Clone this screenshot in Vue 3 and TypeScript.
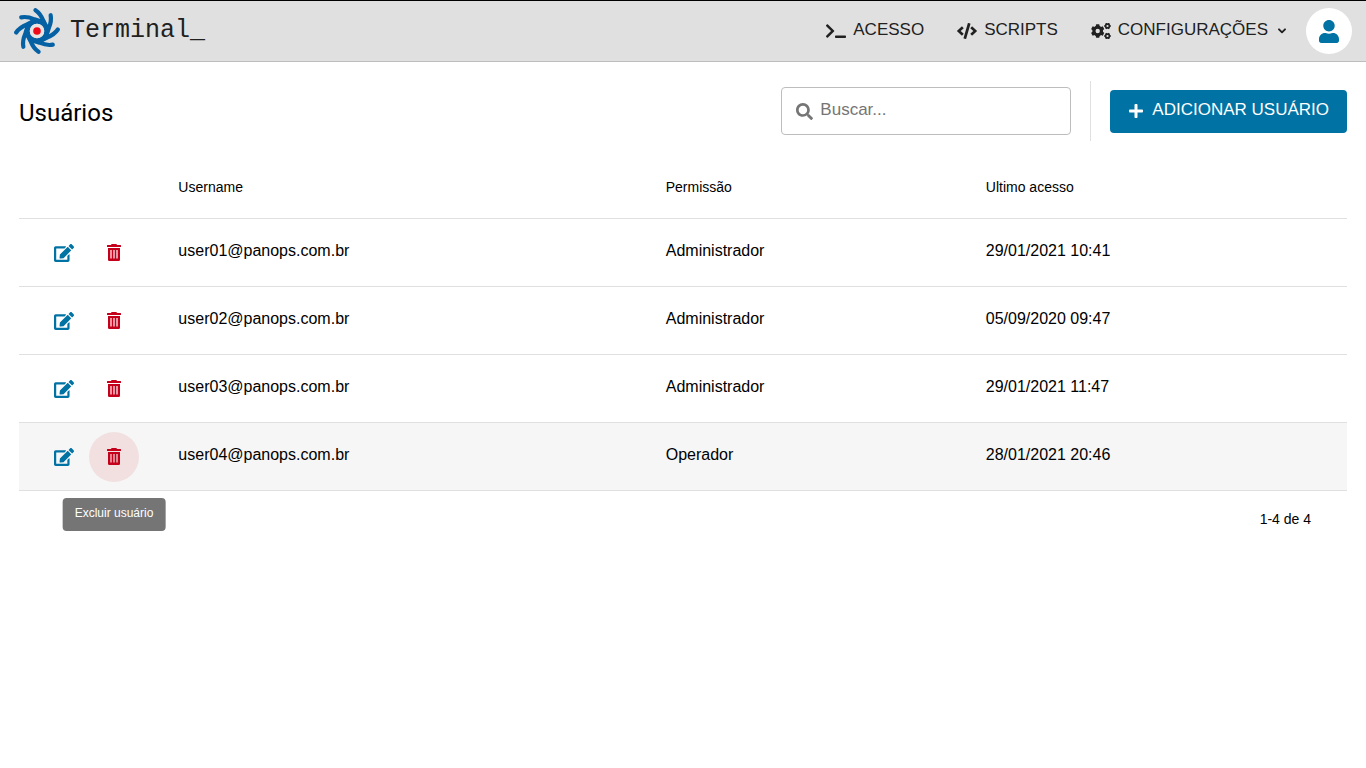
<script setup lang="ts">
import { ref, computed } from 'vue'

interface User {
  name: string
  role: string
  lastAccess: string
}

const search = ref('')
const active = ref('user04@panops.com.br')

const users: User[] = [
  { name: 'user01@panops.com.br', role: 'Administrador', lastAccess: '29/01/2021 10:41' },
  { name: 'user02@panops.com.br', role: 'Administrador', lastAccess: '05/09/2020 09:47' },
  { name: 'user03@panops.com.br', role: 'Administrador', lastAccess: '29/01/2021 11:47' },
  { name: 'user04@panops.com.br', role: 'Operador', lastAccess: '28/01/2021 20:46' },
]

const filtered = computed(() =>
  users.filter((u) => u.name.toLowerCase().includes(search.value.toLowerCase())),
)

const blades = [0, 45, 90, 135, 180, 225, 270, 315]
const teeth = [0, 60, 120, 180, 240, 300]
</script>

<template>
  <div class="page">
    <header class="topbar">
      <a class="brand" href="#">
        <svg class="logo" viewBox="-23 -23 46 46" aria-hidden="true">
          <g fill="none" stroke="#0561a4" stroke-width="4.2" stroke-linecap="round">
            <path
              v-for="angle in blades"
              :key="angle"
              d="M-1.5 -20.8Q3.5 -17.5 6.5 -10Q8 -7 10 -3"
              :transform="`rotate(${angle})`"
            />
            <circle r="9.8" stroke-width="5" />
          </g>
          <circle r="7.2" fill="#e6e3e3" />
          <circle r="3.8" fill="#ee0a18" />
        </svg>
        <span class="brand-name">Terminal_</span>
      </a>

      <nav class="nav">
        <a class="nav-item" href="#">
          <svg class="nav-icon" viewBox="0 0 640 512" aria-hidden="true">
            <path d="M257.981 272.971L63.638 467.314c-9.373 9.373-24.569 9.373-33.941 0L7.029 444.647c-9.357-9.357-9.375-24.522-.04-33.901L161.011 256 6.99 101.255c-9.335-9.379-9.317-24.544.04-33.901l22.667-22.667c9.373-9.373 24.569-9.373 33.941 0L257.981 239.03c9.373 9.372 9.373 24.568 0 33.941zM640 456v-32c0-13.255-10.745-24-24-24H312c-13.255 0-24 10.745-24 24v32c0 13.255 10.745 24 24 24h304c13.255 0 24-10.745 24-24z" />
          </svg>
          <span class="label">ACESSO</span>
        </a>
        <a class="nav-item" href="#">
          <svg class="nav-icon" viewBox="0 0 640 512" aria-hidden="true">
            <path d="M278.9 511.5l-61-17.7c-6.4-1.8-10-8.5-8.2-14.9L346.2 8.7c1.8-6.4 8.5-10 14.9-8.2l61 17.7c6.4 1.8 10 8.5 8.2 14.9L293.8 503.3c-1.9 6.4-8.5 10.1-14.9 8.2zm-114-112.2l43.5-46.4c4.6-4.9 4.3-12.7-.8-17.2L117 256l90.6-79.7c5.1-4.5 5.5-12.3.8-17.2l-43.5-46.4c-4.5-4.8-12.1-5.1-17-.5L3.8 247.2c-5.1 4.7-5.1 12.8 0 17.5l144.1 135.1c4.9 4.6 12.5 4.4 17-.5zm327.2.6l144.1-135.1c5.1-4.7 5.1-12.8 0-17.5L492.1 112.1c-4.8-4.5-12.4-4.3-17 .5L431.6 159c-4.6 4.9-4.3 12.7.8 17.2L523 256l-90.6 79.7c-5.1 4.5-5.5 12.3-.8 17.2l43.5 46.4c4.5 4.9 12.1 5.1 17 .6z" />
          </svg>
          <span class="label">SCRIPTS</span>
        </a>
        <button class="nav-item" type="button" aria-haspopup="true">
          <svg class="nav-icon" viewBox="0 0 20 16" aria-hidden="true">
            <g transform="translate(6.7 8)">
              <rect
                v-for="angle in teeth"
                :key="angle"
                x="-1.8"
                y="-6.7"
                width="3.6"
                height="4"
                rx="0.6"
                :transform="`rotate(${angle})`"
              />
              <circle r="3.8" fill="none" stroke="currentColor" stroke-width="3.2" />
            </g>
            <g v-for="cy in [3, 13]" :key="cy" :transform="`translate(16.5 ${cy})`">
              <rect
                v-for="angle in teeth"
                :key="angle"
                x="-0.9"
                y="-3.2"
                width="1.8"
                height="1.6"
                :transform="`rotate(${angle + 30})`"
              />
              <circle r="1.9" fill="none" stroke="currentColor" stroke-width="1.6" />
            </g>
          </svg>
          <span class="label">CONFIGURAÇÕES</span>
          <svg class="chevron" viewBox="0 0 8 6" aria-hidden="true">
            <path d="M1 1.3L4 4.3L7 1.3" fill="none" stroke="currentColor" stroke-width="1.9" stroke-linecap="round" stroke-linejoin="round" />
          </svg>
        </button>
        <button class="avatar" type="button" aria-label="Perfil">
          <svg viewBox="0 0 448 512" aria-hidden="true">
            <path d="M224 256c70.7 0 128-57.3 128-128S294.7 0 224 0 96 57.3 96 128s57.3 128 128 128zm89.6 32h-16.7c-22.2 10.2-46.9 16-72.9 16s-50.6-5.8-72.9-16h-16.7C60.2 288 0 348.2 0 422.4V464c0 26.5 21.5 48 48 48h352c26.5 0 48-21.5 48-48v-41.6c0-74.2-60.2-134.4-134.4-134.4z" />
          </svg>
        </button>
      </nav>
    </header>

    <main class="content">
      <section class="toolbar">
        <h1>Usuários</h1>
        <label class="search">
          <svg viewBox="0 0 512 512" aria-hidden="true">
            <path d="M505 442.7L405.3 343c-4.5-4.5-10.6-7-17-7H372c27.6-35.3 44-79.7 44-128C416 93.1 322.9 0 208 0S0 93.1 0 208s93.1 208 208 208c48.3 0 92.7-16.4 128-44v16.3c0 6.4 2.5 12.5 7 17l99.7 99.7c9.4 9.4 24.6 9.4 33.9 0l28.3-28.3c9.4-9.4 9.4-24.6.1-34zM208 336c-70.7 0-128-57.2-128-128 0-70.7 57.2-128 128-128 70.7 0 128 57.2 128 128 0 70.7-57.2 128-128 128z" />
          </svg>
          <input v-model="search" type="text" placeholder="Buscar..." aria-label="Buscar" />
        </label>
        <div class="add-area">
          <button class="add" type="button">
            <svg viewBox="0 0 448 512" aria-hidden="true">
              <path d="M416 208H272V64c0-17.67-14.33-32-32-32h-32c-17.67 0-32 14.33-32 32v144H32c-17.67 0-32 14.33-32 32v32c0 17.67 14.33 32 32 32h144v144c0 17.67 14.33 32 32 32h32c17.67 0 32-14.33 32-32V304h144c17.67 0 32-14.33 32-32v-32c0-17.67-14.33-32-32-32z" />
            </svg>
            <span class="label">ADICIONAR USUÁRIO</span>
          </button>
        </div>
      </section>

      <table class="users">
        <colgroup>
          <col class="col-actions" />
          <col class="col-name" />
          <col class="col-role" />
          <col />
        </colgroup>
        <thead>
          <tr>
            <td></td>
            <th scope="col">Username</th>
            <th scope="col">Permissão</th>
            <th scope="col">Ultimo acesso</th>
          </tr>
        </thead>
        <tbody>
          <tr v-for="user in filtered" :key="user.name" :class="{ active: user.name === active }">
            <td>
              <div class="actions">
                <button class="action edit" type="button" aria-label="Editar usuário">
                  <svg viewBox="0 0 576 512" aria-hidden="true">
                    <path d="M402.6 83.2l90.2 90.2c3.8 3.8 3.8 10 0 13.8L274.4 405.6l-92.8 10.3c-12.4 1.4-22.9-9.1-21.5-21.5l10.3-92.8L388.8 83.2c3.8-3.8 10-3.8 13.8 0zm162-22.9l-48.8-48.8c-15.2-15.2-39.9-15.2-55.2 0l-35.4 35.4c-3.8 3.8-3.8 10 0 13.8l90.2 90.2c3.8 3.8 10 3.8 13.8 0l35.4-35.4c15.2-15.3 15.2-40 0-55.2zM384 346.2V448H64V128h229.8c3.2 0 6.2-1.3 8.5-3.5l40-40c7.6-7.6 2.2-20.5-8.5-20.5H48C21.5 64 0 85.5 0 112v352c0 26.5 21.5 48 48 48h352c26.5 0 48-21.5 48-48V306.2c0-10.7-12.9-16-20.5-8.5l-40 40c-2.2 2.3-3.5 5.3-3.5 8.5z" />
                  </svg>
                </button>
                <button class="action remove" type="button" aria-label="Excluir usuário">
                  <svg viewBox="0 0 14 17" aria-hidden="true">
                    <path d="M0.5 1H4L4.6 0H9.4L10 1H13.5Q14 1 14 1.5V3H0V1.5Q0 1 0.5 1Z" />
                    <path fill-rule="evenodd" d="M1 4H13V15.7Q13 17 11.7 17H2.3Q1 17 1 15.7ZM3.4 6V14.5H4.6V6ZM6.4 6V14.5H7.6V6ZM9.4 6V14.5H10.6V6Z" />
                  </svg>
                  <span v-if="user.name === active" class="tooltip" role="tooltip">Excluir usuário</span>
                </button>
              </div>
            </td>
            <td class="text">{{ user.name }}</td>
            <td class="text">{{ user.role }}</td>
            <td class="text">{{ user.lastAccess }}</td>
          </tr>
        </tbody>
      </table>
      <p class="range">1-4 de 4</p>
    </main>
  </div>
</template>

<style>
body {
  margin: 0;
  background: #fff;
}
</style>

<style scoped>
.page {
  color: #000;
  font-family: "Liberation Sans", Arial, sans-serif;
}
svg {
  display: block;
  flex: none;
  fill: currentColor;
}
button {
  padding: 0;
  border: 0;
  background: none;
  font: inherit;
  color: inherit;
  cursor: pointer;
}
.topbar {
  display: flex;
  align-items: center;
  justify-content: space-between;
  height: 60px;
  padding: 0 14px;
  border-top: 1px solid #000;
  border-bottom: 1px solid #bdbdbd;
  background: #e0e0e0;
}
.brand {
  display: flex;
  align-items: center;
  gap: 10px;
  color: #212121;
  text-decoration: none;
}
.logo {
  width: 46px;
  height: 46px;
}
.brand-name {
  font-family: "Liberation Mono", "Courier New", monospace;
  font-size: 25px;
  line-height: 32px;
}
.nav {
  display: flex;
  align-items: center;
  gap: 33px;
}
.nav-item {
  display: flex;
  align-items: center;
  gap: 7px;
  color: #212121;
  font-size: 17px;
  line-height: 20px;
  text-decoration: none;
}
.label {
  padding-bottom: 3px;
}
.nav-icon {
  width: 20px;
  height: 16px;
}
.chevron {
  width: 8px;
  height: 6px;
  margin-left: 3px;
}
.avatar {
  display: flex;
  align-items: center;
  justify-content: center;
  width: 46px;
  height: 46px;
  margin-left: -13px;
  border-radius: 50%;
  background: #fff;
  color: #0072a3;
}
.avatar svg {
  width: 20px;
  height: 23px;
}
.content {
  padding: 19px;
}
.toolbar {
  display: flex;
  align-items: center;
}
h1 {
  margin: 0 auto 0 0;
  padding-top: 3px;
  font-family: Roboto, sans-serif;
  font-size: 24px;
  font-weight: 400;
  line-height: 32px;
}
.search {
  display: flex;
  align-items: center;
  gap: 7px;
  box-sizing: border-box;
  width: 290px;
  height: 48px;
  padding: 0 14px;
  border: 1px solid #bdbdbd;
  border-radius: 4px;
  color: #757575;
}
.search svg {
  width: 17px;
  height: 17px;
}
.search input {
  flex: 1;
  min-width: 0;
  padding: 0 0 3px;
  border: 0;
  outline: 0;
  background: none;
  color: #212121;
  font-family: inherit;
  font-size: 17px;
  line-height: 20px;
}
.search input::placeholder {
  color: #757575;
  opacity: 1;
}
.add-area {
  display: flex;
  align-items: center;
  height: 60px;
  margin-left: 19px;
  padding-left: 19px;
  border-left: 1px solid #e0e0e0;
}
.add {
  display: flex;
  align-items: center;
  gap: 9px;
  height: 43px;
  padding: 0 18px 0 19px;
  border-radius: 4px;
  background: #0072a3;
  color: #fff;
  font-size: 17px;
  line-height: 20px;
}
.add svg {
  width: 14px;
  height: 16px;
}
.users {
  width: 100%;
  margin-top: 16px;
  border-collapse: separate;
  border-spacing: 0;
  table-layout: fixed;
}
.col-actions {
  width: 12%;
}
.col-name {
  width: 36.7%;
}
.col-role {
  width: 24.1%;
}
th,
td {
  box-sizing: border-box;
  padding: 0;
  border-bottom: 1px solid #e0e0e0;
  text-align: left;
  vertical-align: middle;
}
th {
  height: 62px;
  padding-bottom: 2px;
  font-size: 14px;
  font-weight: 400;
  line-height: 20px;
}
tbody td {
  height: 68px;
}
.text {
  padding-bottom: 3px;
  font-size: 16px;
  line-height: 20px;
}
.active td {
  background: #f6f6f6;
}
.actions {
  display: flex;
  padding-left: 20px;
}
.action {
  position: relative;
  display: flex;
  align-items: center;
  justify-content: center;
  width: 50px;
  height: 50px;
  border-radius: 50%;
}
.edit {
  color: #0072a3;
}
.edit svg {
  width: 20px;
  height: 18px;
}
.remove {
  color: #c5001a;
}
.remove svg {
  width: 14px;
  height: 17px;
}
.active .remove {
  background: #f2e0e1;
}
.tooltip {
  position: absolute;
  top: calc(100% + 16px);
  left: 50%;
  transform: translateX(-50%);
  padding: 7px 12px 10px;
  border-radius: 4px;
  background: #757575;
  color: #fff;
  font-size: 12px;
  line-height: 16px;
  white-space: nowrap;
}
.range {
  margin: 18px 36px 0 0;
  font-size: 14px;
  line-height: 20px;
  text-align: right;
}
</style>
